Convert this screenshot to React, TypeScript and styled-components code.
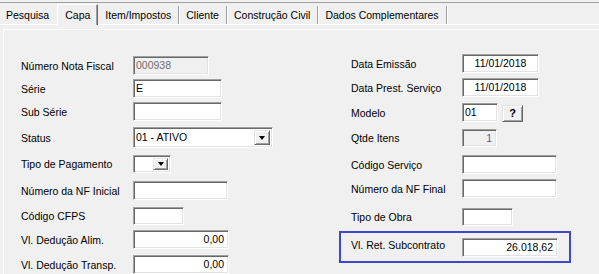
import styled, { createGlobalStyle, css } from "styled-components";

const GlobalStyle = createGlobalStyle`
  html, body {
    margin: 0;
    padding: 0;
    background: #f0f0f0;
  }
  body {
    font-family: "Liberation Sans", Arial, sans-serif;
    font-size: 10.5px;
    color: #000000;
  }
`;

const tabs = [
  "Pesquisa",
  "Capa",
  "Item/Impostos",
  "Cliente",
  "Construção Civil",
  "Dados Complementares",
];
const activeTab = 1;

function App() {
  return (
    <>
      <GlobalStyle />
      <Window>
        <TabBar>
          {tabs.map((name, i) => (
            <Tab
              key={name}
              $active={i === activeTab}
              $noSep={i === activeTab - 1}
            >
              {name}
            </Tab>
          ))}
        </TabBar>

        <Page>
          <Inner>
            <LeftColumn>
              <Row>
                <Label $w={112}>Número Nota Fiscal</Label>
                <TextBox $w={76} $disabled>
                  000938
                </TextBox>
              </Row>
              <Row $gap={4}>
                <Label $w={112}>Série</Label>
                <TextBox $w={89}>E</TextBox>
              </Row>
              <Row $gap={4}>
                <Label $w={112}>Sub Série</Label>
                <TextBox $w={89} />
              </Row>
              <Row $gap={6}>
                <Label $w={112}>Status</Label>
                <Combo $w={140} $h={21}>
                  <ComboText>01 - ATIVO</ComboText>
                  <DropButton $w={16} />
                </Combo>
              </Row>
              <Row $gap={7}>
                <Label $w={112}>Tipo de Pagamento</Label>
                <Combo $w={38} $h={18}>
                  <ComboText />
                  <DropButton $w={15} />
                </Combo>
              </Row>
              <Row $gap={8}>
                <Label $w={112}>Número da NF Inicial</Label>
                <TextBox $w={95} />
              </Row>
              <Row $gap={7}>
                <Label $w={112}>Código CFPS</Label>
                <TextBox $w={51} $h={18} />
              </Row>
              <Row $gap={5}>
                <Label $w={112}>Vl. Dedução Alim.</Label>
                <TextBox $w={96} $align="right">
                  0,00
                </TextBox>
              </Row>
              <Row $gap={6}>
                <Label $w={112}>Vl. Dedução Transp.</Label>
                <TextBox $w={96} $align="right">
                  0,00
                </TextBox>
              </Row>
            </LeftColumn>

            <RightColumn>
              <RightRow>
                <Label $w={111}>Data Emissão</Label>
                <TextBox $w={77} $align="center">
                  11/01/2018
                </TextBox>
              </RightRow>
              <RightRow $gap={5}>
                <Label $w={111}>Data Prest. Serviço</Label>
                <TextBox $w={77} $align="center">
                  11/01/2018
                </TextBox>
              </RightRow>
              <RightRow $gap={6}>
                <Label $w={111}>Modelo</Label>
                <TextBox $w={36}>01</TextBox>
                <HelpButton>?</HelpButton>
              </RightRow>
              <RightRow $gap={7}>
                <Label $w={111}>Qtde Itens</Label>
                <TextBox $w={35} $h={18} $align="right" $disabled $tint>
                  1
                </TextBox>
              </RightRow>
              <RightRow $gap={8}>
                <Label $w={111}>Código Serviço</Label>
                <TextBox $w={95} />
              </RightRow>
              <RightRow $gap={5}>
                <Label $w={111}>Número da NF Final</Label>
                <TextBox $w={95} />
              </RightRow>
              <RightRow $gap={10}>
                <Label $w={111}>Tipo de Obra</Label>
                <TextBox $w={51} $h={18} />
              </RightRow>
              <Highlight>
                <BoxLabel $w={111}>Vl. Ret. Subcontrato</BoxLabel>
                <TextBox $w={96} $align="right">
                  26.018,62
                </TextBox>
              </Highlight>
            </RightColumn>
          </Inner>
        </Page>
      </Window>
    </>
  );
}

const sunken = css`
  box-sizing: border-box;
  border: 1px solid;
  border-color: #a0a0a0 #ffffff #ffffff #a0a0a0;
  box-shadow: inset 1px 1px 0 #696969, inset -1px -1px 0 #e3e3e3;
`;

const raised = css`
  box-sizing: border-box;
  background: #f0f0f0;
  border: 1px solid;
  border-color: #e3e3e3 #696969 #696969 #e3e3e3;
  box-shadow: inset 1px 1px 0 #ffffff, inset -1px -1px 0 #a0a0a0;
`;

const Window = styled.div`
  box-sizing: border-box;
  width: 599px;
  height: 272px;
  margin-top: 2px;
  border-top: 1px solid #a0a0a0;
  overflow: hidden;
  display: flex;
  flex-direction: column;
`;

const TabBar = styled.div`
  display: flex;
  align-items: flex-end;
  height: 21px;
  flex-shrink: 0;
`;

const Tab = styled.div<{ $active?: boolean; $noSep?: boolean }>`
  box-sizing: border-box;
  height: 18px;
  line-height: 18px;
  padding: 0 7px;
  white-space: nowrap;
  border-right: 1px solid ${(p) => (p.$noSep ? "transparent" : "#a0a0a0")};
  box-shadow: ${(p) => (p.$noSep ? "none" : "1px 0 0 #ffffff")};

  ${(p) =>
    p.$active &&
    css`
      position: relative;
      z-index: 1;
      height: 21px;
      line-height: 20px;
      margin-bottom: -1px;
      padding: 0 7px;
      background: #f0f0f0;
      border-left: 1px solid #ffffff;
      border-top: 1px solid #ffffff;
      border-right: 1px solid #696969;
      box-shadow: inset -1px 0 0 #a0a0a0;
    `}

  &:first-child {
    padding-left: 6px;
  }
`;

const Page = styled.div`
  flex: 1;
  border-top: 1px solid #ffffff;
  padding: 4px 0 0 3px;
  display: flex;
  flex-direction: column;
`;

const Inner = styled.div`
  flex: 1;
  display: flex;
  border-top: 1px solid #ffffff;
  border-left: 1px solid #ffffff;
  padding-left: 17px;
`;

const LeftColumn = styled.div`
  width: 318px;
  padding-top: 26px;
  display: flex;
  flex-direction: column;
`;

const RightColumn = styled.div`
  width: 232px;
  padding-top: 24px;
  display: flex;
  flex-direction: column;
`;

const Row = styled.div<{ $gap?: number }>`
  display: flex;
  align-items: center;
  margin-top: ${(p) => p.$gap ?? 0}px;
`;

const RightRow = styled(Row)`
  padding-left: 12px;
`;

const Label = styled.div<{ $w: number }>`
  width: ${(p) => p.$w}px;
  flex-shrink: 0;
  white-space: nowrap;
`;

const BoxLabel = styled(Label)`
  line-height: 15px;
`;

const Highlight = styled.div`
  box-sizing: border-box;
  margin-top: 5px;
  height: 32px;
  border: 2px solid #3f48cc;
  padding: 5px 0 0 10px;
  display: flex;
  align-items: flex-start;
`;

const TextBox = styled.div<{
  $w: number;
  $h?: number;
  $align?: "left" | "right" | "center";
  $disabled?: boolean;
  $tint?: boolean;
}>`
  ${sunken};
  flex-shrink: 0;
  width: ${(p) => p.$w}px;
  height: ${(p) => p.$h ?? 19}px;
  line-height: ${(p) => (p.$h ?? 19) - 2}px;
  padding: 0 ${(p) => (p.$align === "right" ? 4 : 2)}px;
  text-align: ${(p) => p.$align ?? "left"};
  background: ${(p) => (p.$disabled ? "#f0f0f0" : "#ffffff")};
  color: ${(p) => (p.$tint ? "#5a5a8c" : p.$disabled ? "#6d6d6d" : "#000000")};
  white-space: nowrap;
  overflow: hidden;
`;

const Combo = styled.div<{ $w: number; $h: number }>`
  ${sunken};
  display: flex;
  width: ${(p) => p.$w}px;
  height: ${(p) => p.$h}px;
  padding: 2px;
  background: #ffffff;
`;

const ComboText = styled.span`
  flex: 1;
  line-height: 15px;
  white-space: nowrap;
`;

const DropButton = styled.div<{ $w: number }>`
  ${raised};
  width: ${(p) => p.$w}px;
  display: flex;
  align-items: center;
  justify-content: center;

  &::after {
    content: "";
    border-left: 3.5px solid transparent;
    border-right: 3.5px solid transparent;
    border-top: 4px solid #000000;
  }
`;

const HelpButton = styled.div`
  ${raised};
  width: 21px;
  height: 17px;
  margin-left: 4px;
  margin-top: 2px;
  font-weight: bold;
  font-size: 11px;
  line-height: 15px;
  text-align: center;
`;

export default App;
